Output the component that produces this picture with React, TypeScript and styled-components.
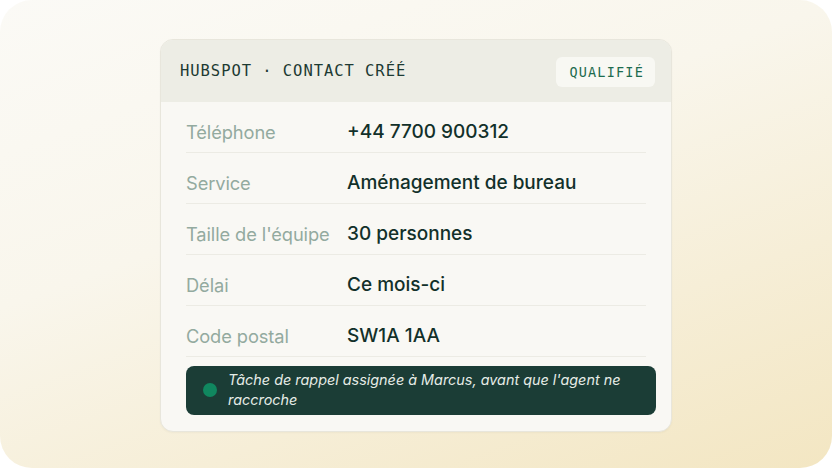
import React from "react";
import styled, { createGlobalStyle } from "styled-components";

const GlobalStyle = createGlobalStyle`
  html, body {
    margin: 0;
    padding: 0;
    background: #ffffff;
  }
  * {
    box-sizing: border-box;
  }
`;

const Frame = styled.div`
  width: 832px;
  height: 468px;
  border-radius: 32px;
  background: linear-gradient(160deg, #fbfaf6 0%, #f9f6ec 40%, #f3e6c2 100%);
  display: flex;
  align-items: center;
  justify-content: center;
`;

const Card = styled.div`
  width: 512px;
  margin-top: 2px;
  border-radius: 13px;
  border: 1px solid #e8e6dc;
  background: #f9f8f4;
  overflow: hidden;
  box-shadow: 0 1px 2px rgba(60, 60, 30, 0.04);
`;

const Header = styled.div`
  height: 62px;
  background: #edede5;
  display: flex;
  align-items: center;
  justify-content: space-between;
  padding: 0 16px 0 19px;
`;

const Title = styled.div`
  font-family: "DejaVu Sans Mono", "Liberation Mono", monospace;
  font-size: 15.5px;
  letter-spacing: 0.95px;
  color: #1d3a33;
`;

const Badge = styled.div`
  font-family: "DejaVu Sans Mono", "Liberation Mono", monospace;
  font-size: 13.5px;
  letter-spacing: 1.2px;
  color: #1d6b4e;
  background: #f8f8f3;
  border-radius: 6px;
  padding: 7px 11px 7px 13px;
  margin-top: 2px;
`;

const Body = styled.div`
  padding: 0 15px 16px 25px;
`;

const Row = styled.div`
  display: flex;
  align-items: center;
  height: 51px;
  padding-top: 10px;
  margin-right: 10px;
  border-bottom: 1px solid #ecebe4;
  font-family: "Inter", "Noto Sans", sans-serif;

  &:last-of-type {
    border-bottom: none;
  }
`;

const Label = styled.div`
  width: 161px;
  color: #93aa9f;
  font-size: 18.3px;
  font-weight: 400;
  letter-spacing: -0.1px;
  white-space: nowrap;
`;

const Value = styled.div`
  color: #12302a;
  font-size: 19px;
  font-weight: 500;
  letter-spacing: 0;
`;

const Callout = styled.div`
  margin-top: 9px;
  background: #1b3d36;
  border-radius: 8px;
  display: flex;
  align-items: center;
  gap: 11px;
  padding: 4px 14px 4px 17px;
  min-height: 48px;
`;

const Dot = styled.span`
  flex: none;
  width: 14px;
  height: 14px;
  border-radius: 50%;
  background: #10875f;
`;

const CalloutText = styled.div`
  font-family: "Inter", "Noto Sans", sans-serif;
  font-style: italic;
  font-size: 14.4px;
  line-height: 20.5px;
  letter-spacing: 0;
  color: #e6ece7;
`;

const rows = [
  { label: "Téléphone", value: "+44 7700 900312" },
  { label: "Service", value: "Aménagement de bureau" },
  { label: "Taille de l'équipe", value: "30 personnes" },
  { label: "Délai", value: "Ce mois-ci" },
  { label: "Code postal", value: "SW1A 1AA" },
];

const App = () => {
  return (
    <>
      <GlobalStyle />
      <Frame>
        <Card>
          <Header>
            <Title>HUBSPOT · CONTACT CRÉÉ</Title>
            <Badge>QUALIFIÉ</Badge>
          </Header>
          <Body>
            {rows.map((r) => (
              <Row key={r.label}>
                <Label>{r.label}</Label>
                <Value>{r.value}</Value>
              </Row>
            ))}
            <Callout>
              <Dot />
              <CalloutText>
                Tâche de rappel assignée à Marcus, avant que l'agent ne raccroche
              </CalloutText>
            </Callout>
          </Body>
        </Card>
      </Frame>
    </>
  );
};

export default App;
